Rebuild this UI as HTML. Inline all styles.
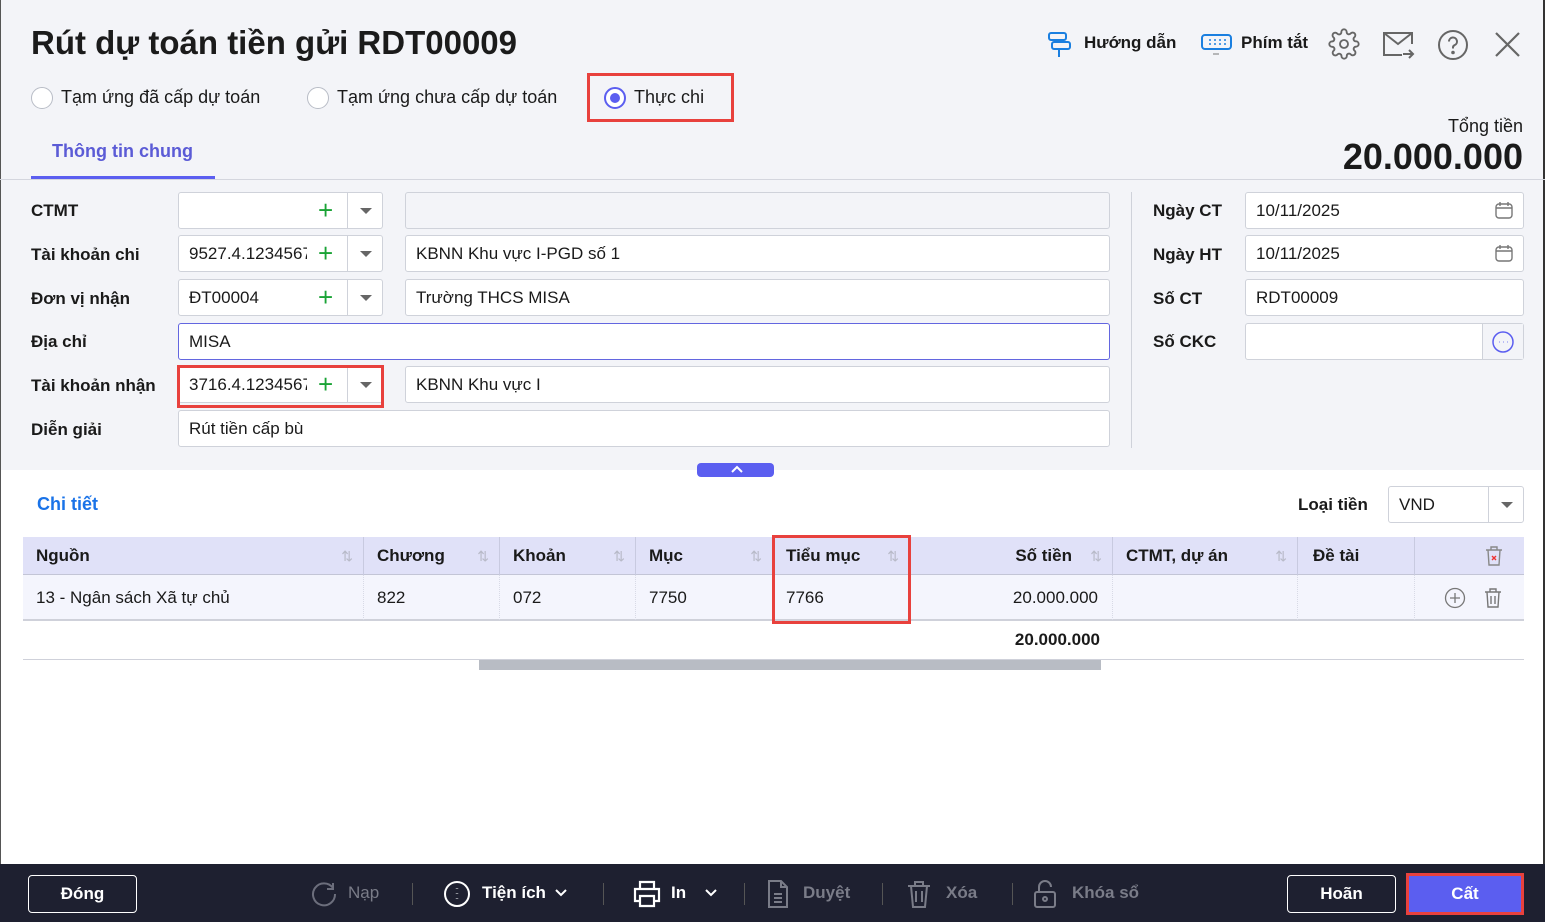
<!DOCTYPE html>
<html><head><meta charset="utf-8"><style>
*{box-sizing:border-box;margin:0;padding:0}
body{width:1545px;height:922px;position:relative;overflow:hidden;font-family:"Liberation Sans",Arial,sans-serif;color:#1a1a1a;background:#fff;font-size:17px}
.a{position:absolute}
.lbl{position:absolute;font-weight:bold;font-size:17px}
.inp{position:absolute;background:#fff;border:1px solid #cfd2da;border-radius:3px;height:37px;padding-left:10px;line-height:35px;font-size:17px;white-space:nowrap;overflow:hidden}
.plus{position:absolute;color:#1aa336;font-size:26px;line-height:37px;font-weight:normal}
.dd{position:absolute;width:35px;height:37px;border-left:1px solid #cfd2da}
.tri{position:absolute;left:12px;top:16px;border-left:6px solid transparent;border-right:6px solid transparent;border-top:6px solid #666}
.radio{position:absolute;width:22px;height:22px;border:1px solid #b8bcc6;border-radius:50%;background:#fff}
.th{position:absolute;top:537px;height:38px;line-height:38px;font-weight:bold;font-size:17px;border-right:1px solid #c8cae0;padding-left:13px}
.td{position:absolute;top:575px;height:45px;line-height:45px;font-size:17px;border-right:1px dotted #d8dae6;padding-left:13px}
.sort{position:absolute;right:10px;top:0;color:#b8bac8;font-size:14px;font-weight:normal}
.fb{position:absolute;top:864px;height:58px;line-height:58px;font-size:17px;font-weight:bold}
</style></head><body>
<div class="a" style="left:0;top:0;width:1545px;height:470px;background:#f3f4f8"></div>
<div class="a" style="left:0;top:0;width:1px;height:922px;background:#555"></div>
<div class="a" style="right:0;top:0;width:2px;height:922px;background:#333"></div>
<div class="a" style="left:31px;top:24px;font-size:33px;font-weight:bold;color:#1b1b1b">Rút dự toán tiền gửi RDT00009</div>

<svg class="a" style="left:1046px;top:30px" width="28" height="30" viewBox="0 0 28 30" fill="none" stroke="#1a7fe0" stroke-width="2"><rect x="3" y="3" width="17" height="7" rx="2"/><rect x="6" y="12" width="18" height="7" rx="2"/><path d="M13 19v8"/></svg>
<div class="a" style="left:1084px;top:33px;font-weight:bold;font-size:17px">Hướng dẫn</div>
<svg class="a" style="left:1200px;top:33px" width="34" height="22" viewBox="0 0 34 22" fill="none" stroke="#1a7fe0" stroke-width="2"><rect x="2" y="2" width="29" height="14" rx="3"/><path d="M9 7h2M14 7h2M19 7h2M24 7h2M9 11h2M14 11h2M19 11h2M24 11h2" stroke-width="1.5"/><path d="M13 21h6" stroke="#777" stroke-width="1"/></svg>
<div class="a" style="left:1241px;top:33px;font-weight:bold;font-size:17px">Phím tắt</div>
<svg class="a" style="left:1328px;top:28px" width="32" height="32" viewBox="0 0 24 24" fill="none" stroke="#666" stroke-width="1.4"><circle cx="12" cy="12" r="3"/><path d="M19.4 15a1.7 1.7 0 0 0 .3 1.8l.1.1a2 2 0 1 1-2.8 2.8l-.1-.1a1.7 1.7 0 0 0-1.8-.3 1.7 1.7 0 0 0-1 1.5V21a2 2 0 1 1-4 0v-.1a1.7 1.7 0 0 0-1.1-1.5 1.7 1.7 0 0 0-1.8.3l-.1.1a2 2 0 1 1-2.8-2.8l.1-.1a1.7 1.7 0 0 0 .3-1.8 1.7 1.7 0 0 0-1.5-1H3a2 2 0 1 1 0-4h.1a1.7 1.7 0 0 0 1.5-1.1 1.7 1.7 0 0 0-.3-1.8l-.1-.1a2 2 0 1 1 2.8-2.8l.1.1a1.7 1.7 0 0 0 1.8.3H9a1.7 1.7 0 0 0 1-1.5V3a2 2 0 1 1 4 0v.1a1.7 1.7 0 0 0 1 1.5 1.7 1.7 0 0 0 1.8-.3l.1-.1a2 2 0 1 1 2.8 2.8l-.1.1a1.7 1.7 0 0 0-.3 1.8V9a1.7 1.7 0 0 0 1.5 1H21a2 2 0 1 1 0 4h-.1a1.7 1.7 0 0 0-1.5 1z"/></svg>
<svg class="a" style="left:1382px;top:30px" width="34" height="30" viewBox="0 0 34 30" fill="none" stroke="#666" stroke-width="2"><path d="M30 14V3H2v22h18"/><path d="M2 3l14 11 14-11"/><path d="M21 24h10M27 20l4 4-4 4"/></svg>
<svg class="a" style="left:1437px;top:29px" width="32" height="32" viewBox="0 0 32 32" fill="none" stroke="#666" stroke-width="2"><circle cx="16" cy="16" r="14"/><path d="M12 12.5a4 4 0 1 1 5.5 3.7c-1 .5-1.5 1.2-1.5 2.3v1"/><circle cx="16" cy="23.5" r=".8" fill="#666"/></svg>
<svg class="a" style="left:1494px;top:31px" width="27" height="27" viewBox="0 0 27 27" stroke="#666" stroke-width="2.2"><path d="M2 2l23 23M25 2L2 25"/></svg>

<div class="radio" style="left:31px;top:87px"></div>
<div class="a" style="left:61px;top:87px;font-size:18px">Tạm ứng đã cấp dự toán</div>
<div class="radio" style="left:307px;top:87px"></div>
<div class="a" style="left:337px;top:87px;font-size:18px">Tạm ứng chưa cấp dự toán</div>
<div class="radio" style="left:604px;top:87px;border:2px solid #5b5ef0"><div style="position:absolute;left:4px;top:4px;width:10px;height:10px;border-radius:50%;background:#5b5ef0"></div></div>
<div class="a" style="left:634px;top:87px;font-size:18px">Thực chi</div>
<div class="a" style="left:587px;top:73px;width:147px;height:49px;border:3px solid #e8413d"></div>

<div class="a" style="left:52px;top:141px;font-size:18px;font-weight:bold;color:#5b5bd6">Thông tin chung</div>
<div class="a" style="left:31px;top:176px;width:184px;height:3px;background:#5b5ef0"></div>
<div class="a" style="left:0;top:179px;width:1545px;height:1px;background:#d4d6de"></div>
<div class="a" style="right:22px;top:116px;font-size:18px">Tổng tiền</div>
<div class="a" style="right:22px;top:136px;font-size:36px;font-weight:bold">20.000.000</div>

<div class="lbl" style="left:31px;top:201px">CTMT</div>
<div class="lbl" style="left:31px;top:245px">Tài khoản chi</div>
<div class="lbl" style="left:31px;top:289px">Đơn vị nhận</div>
<div class="lbl" style="left:31px;top:332px">Địa chỉ</div>
<div class="lbl" style="left:31px;top:376px">Tài khoản nhận</div>
<div class="lbl" style="left:31px;top:420px">Diễn giải</div>

<div class="inp" style="left:178px;top:192px;width:205px"></div><div class="plus" style="left:318px;top:192px">+</div><div class="dd" style="left:347px;top:192px"><div class="tri"></div></div>
<div class="inp" style="left:178px;top:235px;width:205px"><span style="display:inline-block;width:118px;overflow:hidden">9527.4.1234567</span></div><div class="plus" style="left:318px;top:235px">+</div><div class="dd" style="left:347px;top:235px"><div class="tri"></div></div>
<div class="inp" style="left:178px;top:279px;width:205px">ĐT00004</div><div class="plus" style="left:318px;top:279px">+</div><div class="dd" style="left:347px;top:279px"><div class="tri"></div></div>
<div class="inp" style="left:178px;top:366px;width:205px"><span style="display:inline-block;width:118px;overflow:hidden">3716.4.1234567</span></div><div class="plus" style="left:318px;top:366px">+</div><div class="dd" style="left:347px;top:366px"><div class="tri"></div></div>
<div class="a" style="left:177px;top:365px;width:207px;height:43px;border:3px solid #e8413d"></div>

<div class="inp" style="left:405px;top:192px;width:705px;background:#f3f4f8"></div>
<div class="inp" style="left:405px;top:235px;width:705px">KBNN Khu vực I-PGD số 1</div>
<div class="inp" style="left:405px;top:279px;width:705px">Trường THCS MISA</div>
<div class="inp" style="left:178px;top:323px;width:932px;border-color:#6366e0">MISA</div>
<div class="inp" style="left:405px;top:366px;width:705px">KBNN Khu vực I</div>
<div class="inp" style="left:178px;top:410px;width:932px">Rút tiền cấp bù</div>
<div class="a" style="left:1131px;top:192px;width:1px;height:256px;background:#cfd2da"></div>

<div class="lbl" style="left:1153px;top:201px">Ngày CT</div>
<div class="lbl" style="left:1153px;top:245px">Ngày HT</div>
<div class="lbl" style="left:1153px;top:289px">Số CT</div>
<div class="lbl" style="left:1153px;top:332px">Số CKC</div>
<div class="inp" style="left:1245px;top:192px;width:279px">10/11/2025</div>
<div class="inp" style="left:1245px;top:235px;width:279px">10/11/2025</div>
<svg class="a" style="left:1494px;top:200px" width="20" height="20" viewBox="0 0 20 20" fill="none" stroke="#777" stroke-width="1.4"><rect x="2" y="4" width="16" height="14" rx="3"/><path d="M6 2v4M14 2v4M2 8h16"/></svg>
<svg class="a" style="left:1494px;top:243px" width="20" height="20" viewBox="0 0 20 20" fill="none" stroke="#777" stroke-width="1.4"><rect x="2" y="4" width="16" height="14" rx="3"/><path d="M6 2v4M14 2v4M2 8h16"/></svg>
<div class="inp" style="left:1245px;top:279px;width:279px">RDT00009</div>
<div class="inp" style="left:1245px;top:323px;width:279px"></div>
<div class="a" style="left:1482px;top:324px;width:41px;height:35px;border-left:1px solid #cfd2da;background:#f3f4f8"></div>
<svg class="a" style="left:1491px;top:330px" width="24" height="24" viewBox="0 0 24 24" fill="none" stroke="#5b5ef0" stroke-width="1.5"><circle cx="12" cy="12" r="10"/><path d="M8 12h.5M12 12h.5M16 12h.5" stroke-width="1.6"/></svg>

<div class="a" style="left:697px;top:463px;width:77px;height:14px;background:#5b5ef0;border-radius:4px"></div>
<svg class="a" style="left:730px;top:465px" width="14" height="9" viewBox="0 0 14 9" fill="none" stroke="#fff" stroke-width="2"><path d="M2 7l5-5 5 5"/></svg>

<div class="a" style="left:37px;top:494px;font-size:18px;font-weight:bold;color:#1a73e8">Chi tiết</div>
<div class="lbl" style="left:1298px;top:495px">Loại tiền</div>
<div class="inp" style="left:1388px;top:486px;width:136px;height:37px">VND</div>
<div class="dd" style="left:1488px;top:486px"><div class="tri" style="left:12px"></div></div>

<div class="a" style="left:23px;top:537px;width:1501px;height:38px;background:#e0e1f8;border-bottom:1px solid #c3c5d6"></div>
<div class="a" style="left:23px;top:575px;width:1501px;height:46px;background:#f4f5fd;border-bottom:2px solid #cfd1da"></div>
<div class="th" style="left:23px;width:341px">Nguồn<span class="sort">⇅</span></div>
<div class="th" style="left:364px;width:136px">Chương<span class="sort">⇅</span></div>
<div class="th" style="left:500px;width:136px">Khoản<span class="sort">⇅</span></div>
<div class="th" style="left:636px;width:137px">Mục<span class="sort">⇅</span></div>
<div class="th" style="left:773px;width:137px">Tiểu mục<span class="sort">⇅</span></div>
<div class="th" style="left:910px;width:203px;text-align:right;padding-right:40px">Số tiền<span class="sort">⇅</span></div>
<div class="th" style="left:1113px;width:185px">CTMT, dự án<span class="sort">⇅</span></div>
<div class="th" style="left:1298px;width:117px;padding-left:15px">Đề tài</div>
<svg class="a" style="left:1484px;top:545px" width="20" height="22" viewBox="0 0 20 22" fill="none" stroke="#888" stroke-width="1.4"><path d="M2 5h16M7 5V2h6v3M4 5l1 15h10l1-15"/><path d="M8 11l4 4M12 11l-4 4" stroke="#e33"/></svg>
<div class="td" style="left:23px;width:341px">13 - Ngân sách Xã tự chủ</div>
<div class="td" style="left:364px;width:136px">822</div>
<div class="td" style="left:500px;width:136px">072</div>
<div class="td" style="left:636px;width:137px">7750</div>
<div class="td" style="left:773px;width:137px">7766</div>
<div class="td" style="left:910px;width:203px;text-align:right;padding-right:14px">20.000.000</div>
<div class="td" style="left:1113px;width:185px"></div>
<div class="td" style="left:1298px;width:117px"></div>
<svg class="a" style="left:1444px;top:587px" width="22" height="22" viewBox="0 0 22 22" fill="none" stroke="#777" stroke-width="1.3"><circle cx="11" cy="11" r="9.5"/><path d="M11 6v10M6 11h10"/></svg>
<svg class="a" style="left:1483px;top:587px" width="20" height="22" viewBox="0 0 20 22" fill="none" stroke="#777" stroke-width="1.4"><path d="M2 5h16M7 5V2h6v3M4 5l1 15h10l1-15M8 9v8M12 9v8"/></svg>
<div class="a" style="left:772px;top:535px;width:139px;height:89px;border:3px solid #e8413d"></div>
<div class="a" style="left:910px;top:630px;width:190px;text-align:right;font-weight:bold;font-size:17px">20.000.000</div>
<div class="a" style="left:23px;top:659px;width:1501px;height:1px;background:#cfd1da"></div>
<div class="a" style="left:479px;top:660px;width:622px;height:10px;background:#b8bcc4"></div>

<div class="a" style="left:0;top:864px;width:1545px;height:58px;background:#1e2030"></div>
<div class="a" style="left:28px;top:875px;width:109px;height:38px;border:1.5px solid #fff;border-radius:4px;color:#fff;font-weight:bold;text-align:center;line-height:35px">Đóng</div>
<svg class="a" style="left:310px;top:880px" width="28" height="28" viewBox="0 0 28 28" fill="none" stroke="#6c6e7c" stroke-width="2"><path d="M23 8A11 11 0 1 0 25 14"/><path d="M23 3v6h-6"/></svg>
<div class="fb" style="left:348px;color:#7a7c88;font-weight:normal">Nạp</div>
<div class="a" style="left:412px;top:883px;width:1px;height:22px;background:#555"></div>
<svg class="a" style="left:443px;top:880px" width="28" height="28" viewBox="0 0 28 28" fill="none" stroke="#fff" stroke-width="2"><circle cx="14" cy="14" r="12"/><path d="M14 8v.5M14 13v.5M14 18v.5" stroke-width="2.5"/></svg>
<div class="fb" style="left:482px;color:#fff">Tiện ích</div>
<svg class="a" style="left:554px;top:888px" width="14" height="10" viewBox="0 0 14 10" fill="none" stroke="#fff" stroke-width="2"><path d="M2 2l5 5 5-5"/></svg>
<div class="a" style="left:603px;top:883px;width:1px;height:22px;background:#555"></div>
<svg class="a" style="left:632px;top:879px" width="30" height="30" viewBox="0 0 30 30" fill="none" stroke="#fff" stroke-width="2.2"><path d="M8 10V3h14v7M8 22H3V10h24v12h-5M8 17h14v10H8z"/></svg>
<div class="fb" style="left:671px;color:#fff">In</div>
<svg class="a" style="left:704px;top:888px" width="14" height="10" viewBox="0 0 14 10" fill="none" stroke="#fff" stroke-width="2"><path d="M2 2l5 5 5-5"/></svg>
<div class="a" style="left:744px;top:883px;width:1px;height:22px;background:#555"></div>
<svg class="a" style="left:766px;top:879px" width="24" height="30" viewBox="0 0 24 30" fill="none" stroke="#7a7c88" stroke-width="2"><path d="M3 2h12l6 6v20H3zM15 2v6h6M8 15h8M8 19h8M8 23h8"/></svg>
<div class="fb" style="left:803px;color:#7a7c88">Duyệt</div>
<div class="a" style="left:882px;top:883px;width:1px;height:22px;background:#555"></div>
<svg class="a" style="left:906px;top:879px" width="26" height="30" viewBox="0 0 26 30" fill="none" stroke="#7a7c88" stroke-width="2"><path d="M2 7h22M9 7V3h8v4M5 7l2 21h12l2-21M10 12v11M16 12v11"/></svg>
<div class="fb" style="left:946px;color:#7a7c88">Xóa</div>
<div class="a" style="left:1012px;top:883px;width:1px;height:22px;background:#555"></div>
<svg class="a" style="left:1032px;top:879px" width="26" height="30" viewBox="0 0 26 30" fill="none" stroke="#7a7c88" stroke-width="2"><rect x="3" y="13" width="20" height="15" rx="2"/><path d="M7 13V8a6 6 0 0 1 12 0"/><circle cx="13" cy="20" r="2"/></svg>
<div class="fb" style="left:1072px;color:#7a7c88">Khóa sổ</div>
<div class="a" style="left:1287px;top:875px;width:109px;height:38px;border:1.5px solid #fff;border-radius:4px;color:#fff;font-weight:bold;text-align:center;line-height:35px">Hoãn</div>
<div class="a" style="left:1406px;top:873px;width:118px;height:42px;border:3px solid #e8413d;background:#5b5ef0;color:#fff;font-weight:bold;text-align:center;line-height:36px">Cất</div>
</body></html>
